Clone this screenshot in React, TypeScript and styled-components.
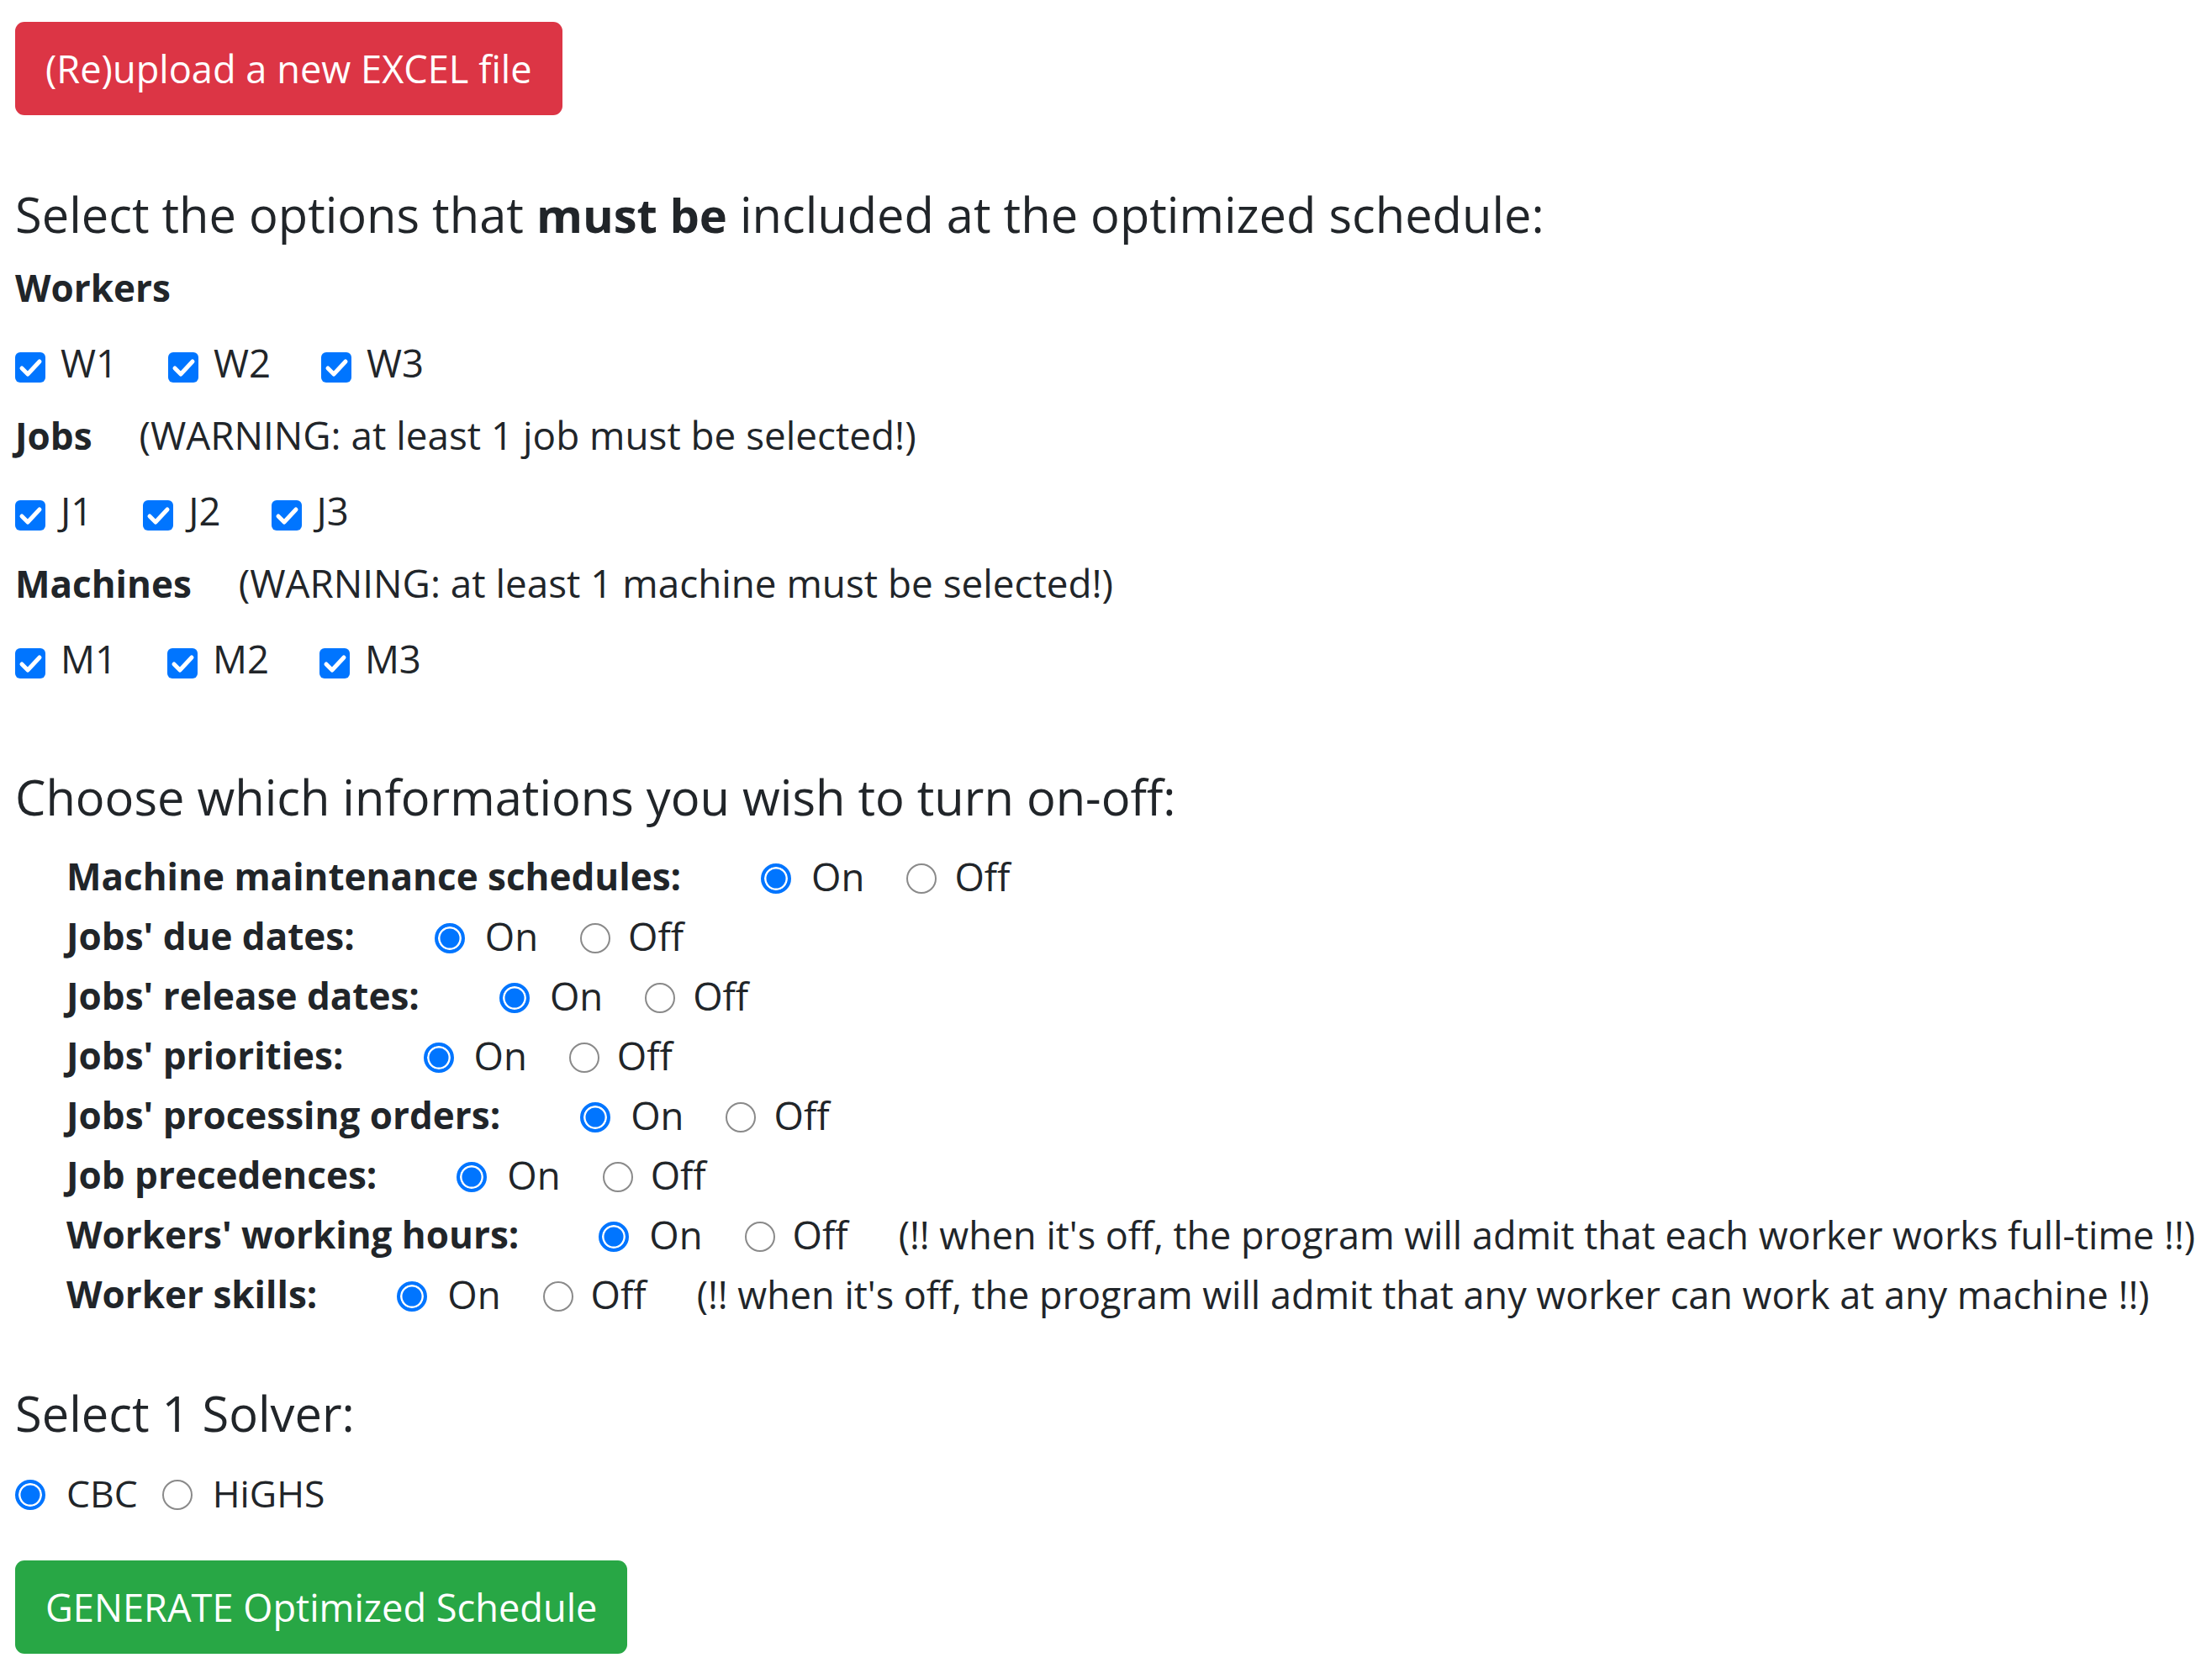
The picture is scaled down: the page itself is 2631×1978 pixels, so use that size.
import * as React from 'react';
import styled, { createGlobalStyle } from 'styled-components';

const FONT = `"Open Sans", "Noto Sans", "Liberation Sans", sans-serif`;
const TEXT = '#212529';
const BLUE = '#0075ff';

const GlobalStyle = createGlobalStyle`
  html, body {
    margin: 0;
    padding: 0;
    background: #fff;
  }
  body {
    font-family: ${FONT};
    color: ${TEXT};
    font-size: 45.5px;
    line-height: 71px;
  }
`;

const Page = styled.main`
  display: flex;
  flex-direction: column;
  align-items: flex-start;
  padding: 26px 18px 0;
`;

const ActionButton = styled.button<{ $variant: 'danger' | 'success'; $top?: number }>`
  height: 111px;
  padding: 0 36px;
  margin-top: ${(p) => p.$top || 0}px;
  border: none;
  border-radius: 11px;
  font-family: ${FONT};
  font-size: 45.2px;
  color: #fff;
  background: ${(p) => (p.$variant === 'danger' ? '#dc3545' : '#28a745')};
  cursor: pointer;
`;

const Heading = styled.h5<{ $top: number }>`
  margin: ${(p) => p.$top}px 0 0;
  font-size: 57.8px;
  font-weight: 400;
  line-height: 70px;
  white-space: nowrap;

  b {
    font-size: 56px;
  }
`;

const GroupLabel = styled.div<{ $top: number }>`
  margin-top: ${(p) => p.$top}px;
  font-size: 44px;
  font-weight: 700;
  line-height: 71px;
  white-space: nowrap;
`;

const Warning = styled.span`
  margin-left: 56px;
  font-size: 45.8px;
  font-weight: 400;
`;

const CheckRow = styled.div`
  display: flex;
  align-items: center;
  gap: 60px;
  height: 71px;
  margin-top: 18px;
`;

const CheckItem = styled.label`
  display: flex;
  align-items: center;
  gap: 18px;
`;

const Box = styled.span`
  display: inline-flex;
  align-items: center;
  justify-content: center;
  width: 36px;
  height: 36px;
  margin-top: 12px;
  border-radius: 6px;
  background: ${BLUE};
  flex-shrink: 0;
`;

const OptionList = styled.div`
  display: flex;
  flex-direction: column;
  margin-top: 23.5px;
  padding-left: 61px;
`;

const OptionRow = styled.div`
  display: flex;
  align-items: center;
  height: 71px;
  white-space: nowrap;
`;

const OptionLabel = styled.span`
  font-size: 44px;
  font-weight: 700;
  margin-right: 95px;
`;

const Note = styled.span`
  font-size: 45px;
`;

const RadioItem = styled.label<{ $gap?: number; $after?: number }>`
  display: flex;
  align-items: center;
  gap: ${(p) => p.$gap || 24}px;
  margin-right: ${(p) => p.$after || 0}px;
`;

const RadioDot = styled.span<{ $checked: boolean }>`
  box-sizing: border-box;
  width: 36px;
  height: 36px;
  margin-top: 6px;
  border-radius: 50%;
  flex-shrink: 0;
  border: ${(p) => (p.$checked ? `4px solid ${BLUE}` : '2.5px solid #8a8a8a')};
  background: ${(p) => (p.$checked ? BLUE : '#fff')};
  box-shadow: ${(p) => (p.$checked ? 'inset 0 0 0 2.5px #fff' : 'none')};
`;

const SolverRow = styled.div`
  display: flex;
  align-items: center;
  height: 71px;
  margin-top: 23.5px;
  font-size: 44.5px;
`;

function Checkbox({ label }: { label: string }) {
  return (
    <CheckItem>
      <Box>
        <svg width="36" height="36" viewBox="0 0 36 36">
          <path
            d="M8 19 L15 26 L29 11"
            fill="none"
            stroke="#fff"
            strokeWidth="5"
            strokeLinecap="round"
            strokeLinejoin="round"
          />
        </svg>
      </Box>
      {label}
    </CheckItem>
  );
}

const groups = [
  { name: 'Workers', items: ['W1', 'W2', 'W3'], top: 16.5 },
  {
    name: 'Jobs',
    warning: '(WARNING: at least 1 job must be selected!)',
    items: ['J1', 'J2', 'J3'],
    top: 15,
  },
  {
    name: 'Machines',
    warning: '(WARNING: at least 1 machine must be selected!)',
    items: ['M1', 'M2', 'M3'],
    top: 15,
  },
];

const options = [
  { label: 'Machine maintenance schedules:' },
  { label: "Jobs' due dates:" },
  { label: "Jobs' release dates:" },
  { label: "Jobs' priorities:" },
  { label: "Jobs' processing orders:" },
  { label: 'Job precedences:' },
  {
    label: "Workers' working hours:",
    note: "(!! when it's off, the program will admit that each worker works full-time !!)",
  },
  {
    label: 'Worker skills:',
    note: "(!! when it's off, the program will admit that any worker can work at any machine !!)",
  },
];

export default function App() {
  return (
    <>
      <GlobalStyle />
      <Page>
        <ActionButton $variant="danger">(Re)upload a new EXCEL file</ActionButton>

        <Heading $top={83}>
          Select the options that <b>must be</b> included at the optimized schedule:
        </Heading>
        {groups.map((g) => (
          <React.Fragment key={g.name}>
            <GroupLabel $top={g.top}>
              {g.name}
              {g.warning && <Warning>{g.warning}</Warning>}
            </GroupLabel>
            <CheckRow>
              {g.items.map((it) => (
                <Checkbox key={it} label={it} />
              ))}
            </CheckRow>
          </React.Fragment>
        ))}

        <Heading $top={94.5}>Choose which informations you wish to turn on-off:</Heading>
        <OptionList>
          {options.map((o) => (
            <OptionRow key={o.label}>
              <OptionLabel>{o.label}</OptionLabel>
              <RadioItem $after={50}>
                <RadioDot $checked />
                On
              </RadioItem>
              <RadioItem $gap={21} $after={o.note ? 60 : 0}>
                <RadioDot $checked={false} />
                Off
              </RadioItem>
              {o.note && <Note>{o.note}</Note>}
            </OptionRow>
          ))}
        </OptionList>

        <Heading $top={71.5}>Select 1 Solver:</Heading>
        <SolverRow>
          <RadioItem $gap={25} $after={29}>
            <RadioDot $checked />
            CBC
          </RadioItem>
          <RadioItem>
            <RadioDot $checked={false} />
            HiGHS
          </RadioItem>
        </SolverRow>

        <ActionButton $variant="success" $top={45}>
          GENERATE Optimized Schedule
        </ActionButton>
      </Page>
    </>
  );
}
